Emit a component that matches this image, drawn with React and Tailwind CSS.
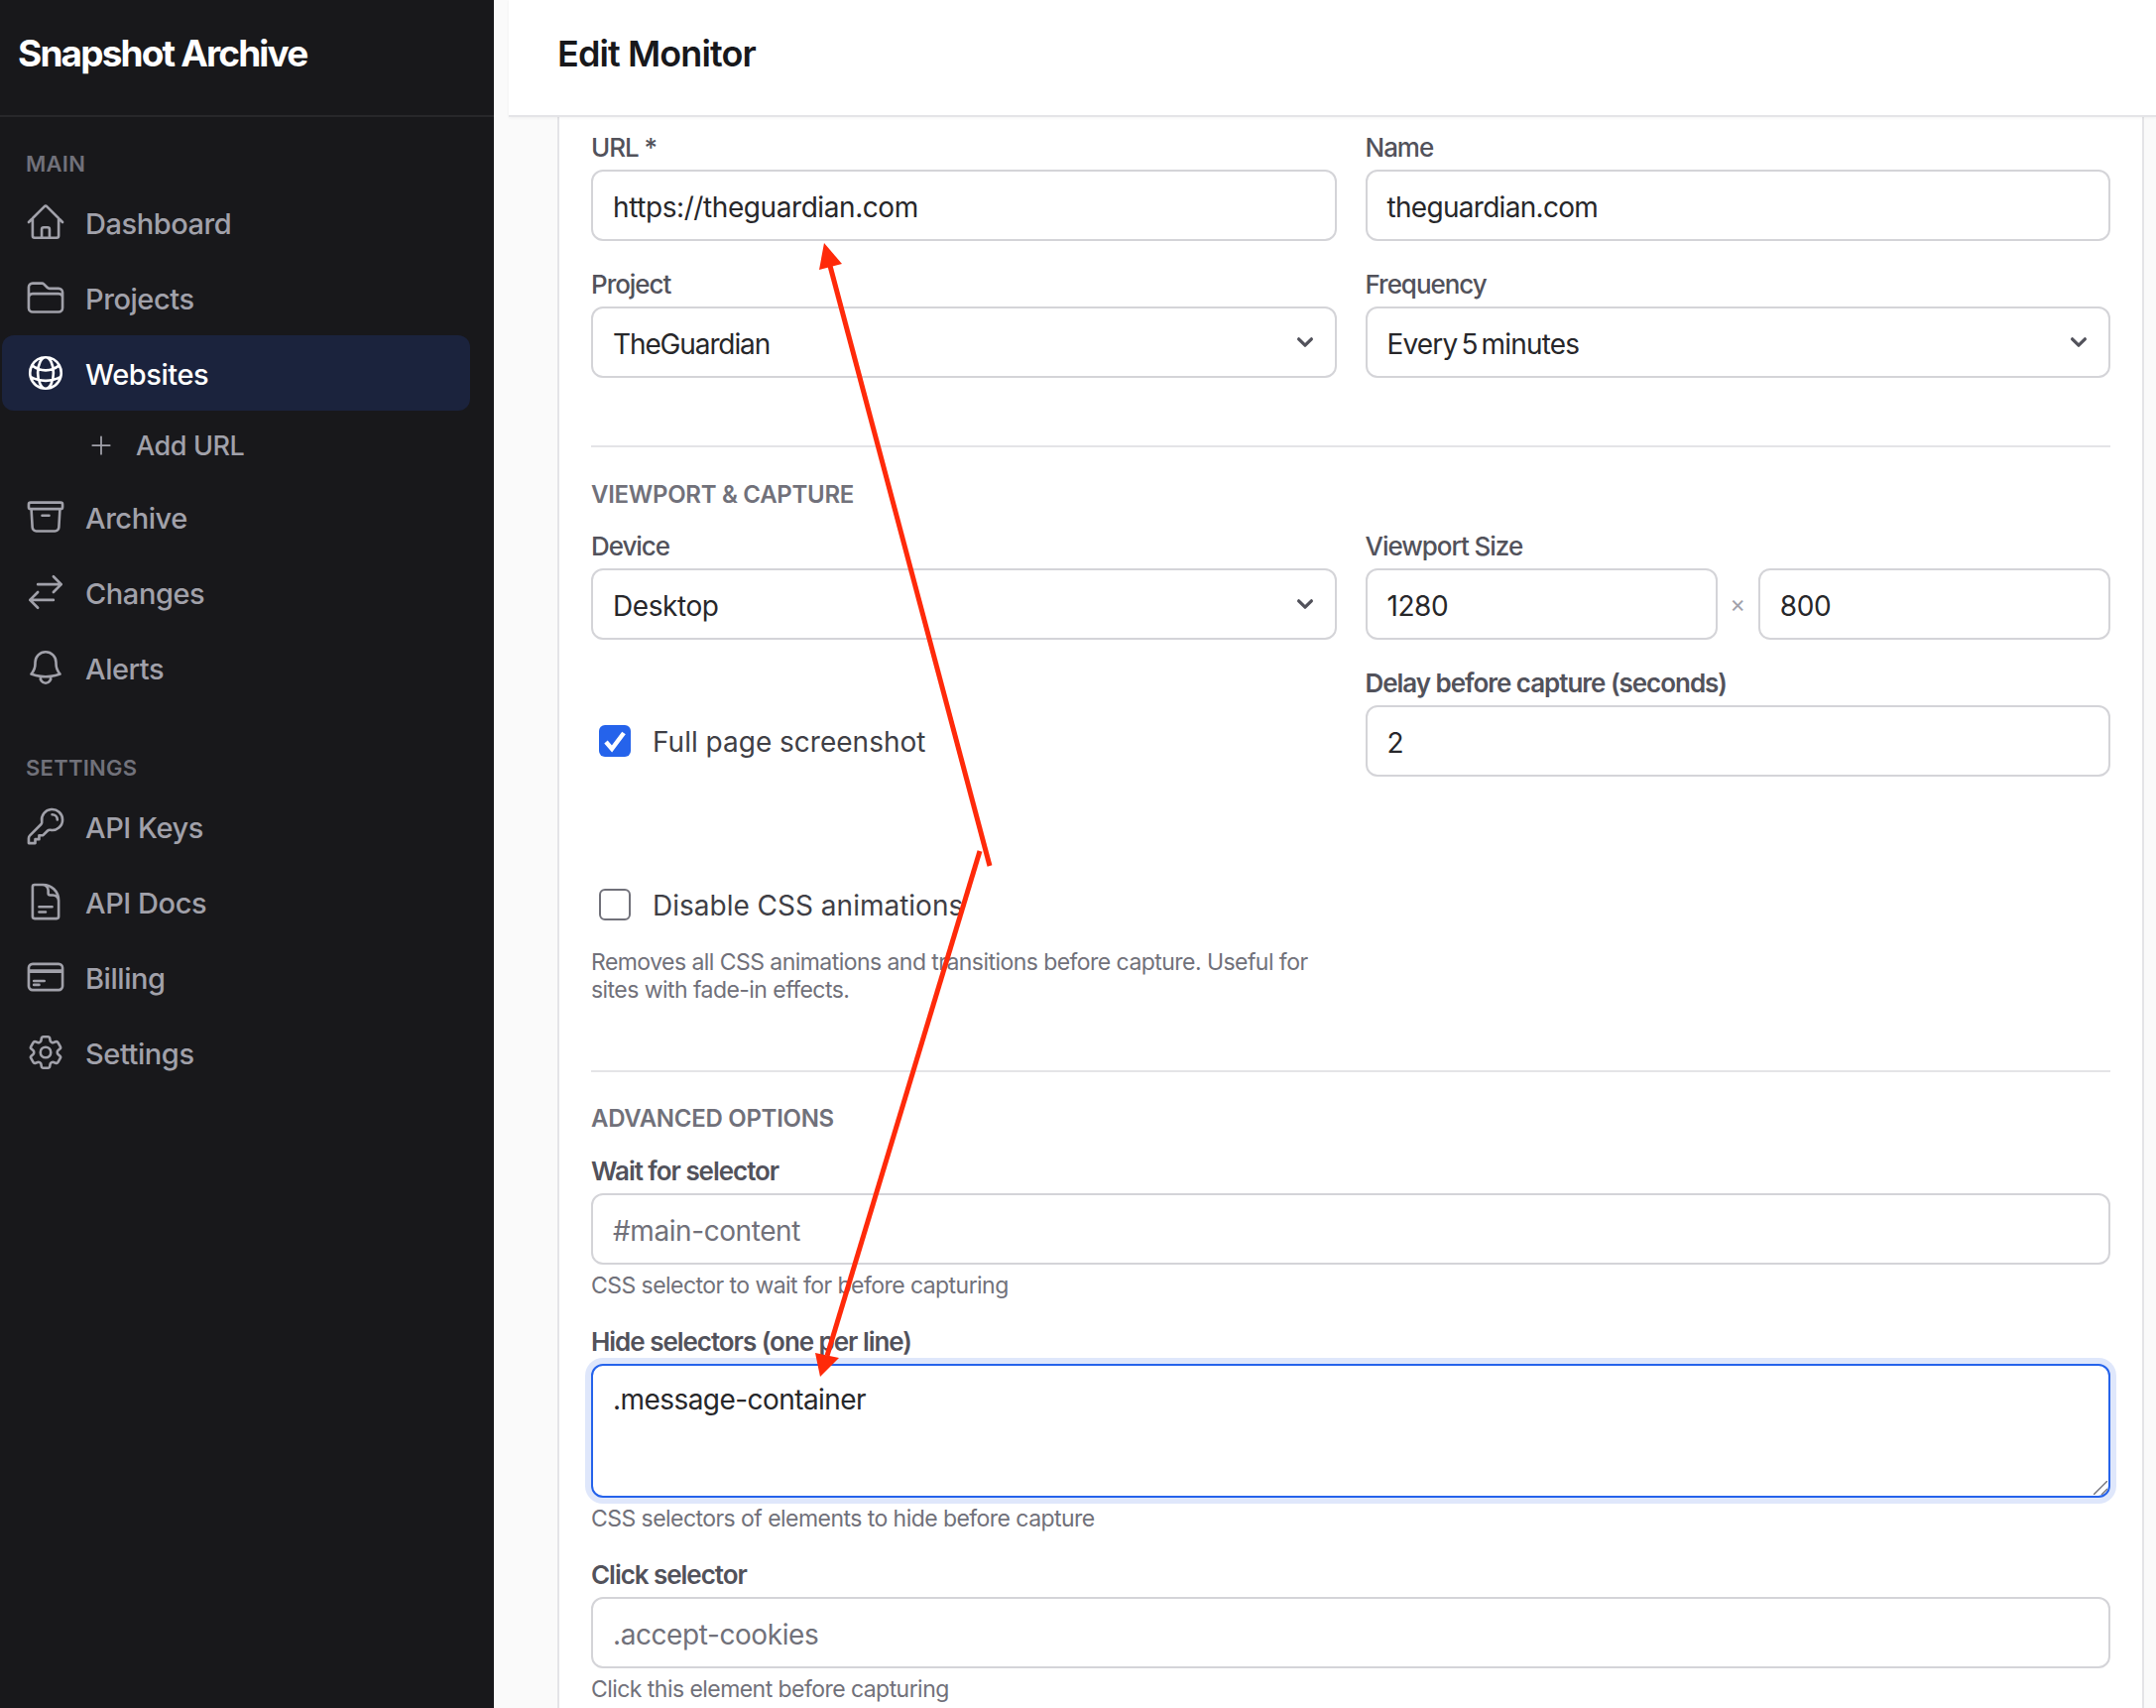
import React from "react";
import {
  HiOutlineHome, HiOutlineFolder, HiOutlineGlobeAlt, HiOutlinePlus, HiOutlineArchiveBox,
  HiOutlineArrowsRightLeft, HiOutlineBell, HiOutlineKey, HiOutlineDocumentText,
  HiOutlineCreditCard, HiOutlineCog6Tooth,
} from "react-icons/hi2";

function NavItem({ icon: Icon, label, active }) {
  return (
    <div className={`flex h-[76px] items-center gap-[19px] rounded-[12px] pl-[23px] text-[29px] font-medium tracking-[-0.015em] ${active ? "bg-[#1b233d] text-white" : "text-[#a1a1aa]"}`}>
      <Icon className="h-[42px] w-[42px] shrink-0" />
      <span className="pt-[4px]">{label}</span>
    </div>
  );
}

function SideHeading({ children, className }) {
  return <div className={`pl-[24px] text-[22px] leading-[32px] font-semibold tracking-[0.012em] text-[#71717a] uppercase ${className}`}>{children}</div>;
}

function Label({ children, bold }) {
  return <div className={`mb-[4px] h-[36px] text-[26px] leading-[36px] tracking-[-0.04em] text-[#52525b] ${bold ? "font-semibold" : "font-medium"}`}>{children}</div>;
}

function Box({ children, muted, className = "" }) {
  return (
    <div className={`flex h-[72px] items-center justify-between rounded-[12px] border-2 border-[#d4d4d8] bg-white pr-[14px] pl-[20px] text-[28px] tracking-[-0.015em] ${muted ? "text-[#71717a]" : "text-[#27272a]"} ${className}`}>
      {children}
    </div>
  );
}

function Value({ children, className = "" }) {
  return <span className={`pt-[3px] ${className}`}>{children}</span>;
}

function Chevron() {
  return (
    <svg viewBox="0 0 20 20" className="h-[32px] w-[32px] shrink-0" fill="none" stroke="#52525b" strokeWidth="2" strokeLinecap="round" strokeLinejoin="round">
      <path d="M6 8l4 4 4-4" />
    </svg>
  );
}

function Hint({ children, className = "" }) {
  return <div className={`text-[23px] leading-[28px] tracking-[-0.024em] text-[#71717a] ${className}`}>{children}</div>;
}

function SectionTitle({ children }) {
  return <div className="h-[36px] text-[24px] leading-[36px] font-semibold tracking-[-0.012em] text-[#71717a] uppercase">{children}</div>;
}

function CheckRow({ checked, label }) {
  return (
    <div className="flex h-[72px] items-center gap-[22px] pl-[8px]">
      {checked ? (
        <div className="flex h-[32px] w-[32px] items-center justify-center rounded-[6px] bg-[#2563eb]">
          <svg viewBox="0 0 32 32" className="h-[32px] w-[32px]" fill="none" stroke="#ffffff" strokeWidth="4.5">
            <path d="M7 17L13 24L25 8" />
          </svg>
        </div>
      ) : (
        <div className="h-[32px] w-[32px] rounded-[6px] border-2 border-[#71717a] bg-white" />
      )}
      <span className="pt-[2px] text-[28px] text-[#3f3f46]">{label}</span>
    </div>
  );
}

export default function App() {
  return (
    <div className="relative flex h-[1722px] w-[2174px] overflow-hidden bg-[#fafafa] font-['Inter','Liberation_Sans',sans-serif]">
      <aside className="flex h-full w-[498px] shrink-0 flex-col bg-[#18181b]">
        <div className="flex h-[118px] shrink-0 items-center border-b-2 border-[#27272a] pb-[8px] pl-[18px] text-[37px] font-bold tracking-[-0.05em] text-white">
          Snapshot Archive
        </div>
        <nav className="flex flex-col pr-[24px] pl-[2px]">
          <SideHeading className="mt-[31px] mb-[5px]">Main</SideHeading>
          <NavItem icon={HiOutlineHome} label="Dashboard" />
          <NavItem icon={HiOutlineFolder} label="Projects" />
          <NavItem icon={HiOutlineGlobeAlt} label="Websites" active />
          <div className="flex h-[69px] items-center gap-[21px] pl-[86px] text-[27px] font-medium tracking-[-0.015em] text-[#a1a1aa]">
            <HiOutlinePlus className="h-[28px] w-[28px] shrink-0" />
            <span className="pt-[3px]">Add URL</span>
          </div>
          <NavItem icon={HiOutlineArchiveBox} label="Archive" />
          <NavItem icon={HiOutlineArrowsRightLeft} label="Changes" />
          <NavItem icon={HiOutlineBell} label="Alerts" />
          <SideHeading className="mt-[47px] mb-[5px]">Settings</SideHeading>
          <NavItem icon={HiOutlineKey} label="API Keys" />
          <NavItem icon={HiOutlineDocumentText} label="API Docs" />
          <NavItem icon={HiOutlineCreditCard} label="Billing" />
          <NavItem icon={HiOutlineCog6Tooth} label="Settings" />
        </nav>
      </aside>

      <main className="flex min-w-0 flex-1 flex-col">
        <header className="z-10 ml-[15px] flex h-[118px] shrink-0 items-center border-b-2 border-[#e4e4e7] bg-white pb-[8px] pl-[49px] text-[36px] font-semibold tracking-[-0.025em] text-[#18181b] shadow-[0_1px_3px_rgba(0,0,0,0.05)]">
          Edit Monitor
        </header>

        <section className="mr-[12px] ml-[64px] flex-1 border-x-2 border-[#e4e4e7] bg-white px-[32px] pt-[13px]">
          <div className="grid grid-cols-2 gap-x-[29px] gap-y-[26px]">
            <div>
              <Label>URL *</Label>
              <Box><Value>https://theguardian.com</Value></Box>
            </div>
            <div>
              <Label>Name</Label>
              <Box><Value className="tracking-[-0.025em]">theguardian.com</Value></Box>
            </div>
            <div>
              <Label>Project</Label>
              <Box><Value className="tracking-[-0.04em]">TheGuardian</Value><Chevron /></Box>
            </div>
            <div>
              <Label>Frequency</Label>
              <Box><Value className="tracking-[-0.03em] [word-spacing:-3px]">Every 5 minutes</Value><Chevron /></Box>
            </div>
          </div>

          <div className="mt-[68px] mb-[30px] border-t-2 border-[#e4e4e7]" />
          <SectionTitle>Viewport &amp; Capture</SectionTitle>

          <div className="mt-[16px] grid grid-cols-2 gap-x-[29px] gap-y-[26px]">
            <div>
              <Label>Device</Label>
              <Box><Value>Desktop</Value><Chevron /></Box>
            </div>
            <div>
              <Label>Viewport Size</Label>
              <div className="flex items-center">
                <Box className="flex-1"><Value>1280</Value></Box>
                <span className="w-[41px] text-center text-[24px] text-[#a1a1aa]">×</span>
                <Box className="flex-1"><Value>800</Value></Box>
              </div>
            </div>
            <div className="pt-[40px]">
              <CheckRow checked label="Full page screenshot" />
            </div>
            <div>
              <Label bold>Delay before capture (seconds)</Label>
              <Box><Value>2</Value></Box>
            </div>
          </div>

          <div className="mt-[93px] w-[751px]">
            <CheckRow label="Disable CSS animations" />
            <Hint className="mt-[8px]">Removes all CSS animations and transitions before capture. Useful for sites with fade-in effects.</Hint>
          </div>

          <div className="mt-[67px] mb-[29px] border-t-2 border-[#e4e4e7]" />
          <SectionTitle>Advanced Options</SectionTitle>

          <div className="mt-[17px]">
            <Label bold>Wait for selector</Label>
            <Box muted><Value>#main-content</Value></Box>
            <Hint className="mt-[7px]">CSS selector to wait for before capturing</Hint>
          </div>

          <div className="mt-[25px]">
            <Label bold>Hide selectors (one per line)</Label>
            <div className="relative h-[135px] rounded-[12px] border-2 border-[#2563eb] bg-white pt-[15px] pl-[20px] text-[28px] leading-[38px] tracking-[-0.02em] text-[#27272a] ring-[6px] ring-[#dfe7fb]">
              .message-container
              <svg viewBox="0 0 14 14" className="absolute right-[1px] bottom-[1px] h-[14px] w-[14px]" fill="none" stroke="#71717a" strokeWidth="1.4">
                <path d="M0 14L14 0M8 14L14 8" />
              </svg>
            </div>
            <Hint className="mt-[7px]">CSS selectors of elements to hide before capture</Hint>
          </div>

          <div className="mt-[25px]">
            <Label bold>Click selector</Label>
            <Box muted><Value>.accept-cookies</Value></Box>
            <Hint className="mt-[7px]">Click this element before capturing</Hint>
          </div>
        </section>
      </main>

      <svg className="pointer-events-none absolute top-0 left-0 z-20 h-[1722px] w-[2174px]" viewBox="0 0 2174 1722" fill="#ff2a0a">
        <line x1="998" y1="873" x2="837" y2="268" stroke="#ff2a0a" strokeWidth="5" />
        <polygon points="831,245 849,266 826,272" />
        <line x1="988" y1="858" x2="834" y2="1367" stroke="#ff2a0a" strokeWidth="5" />
        <polygon points="827,1388 846,1369 822,1364" />
      </svg>
    </div>
  );
}
